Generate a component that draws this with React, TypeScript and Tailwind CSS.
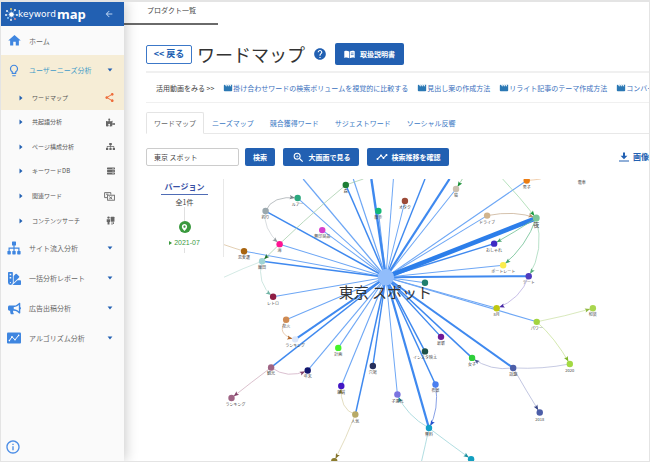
import type { ReactNode } from 'react';
import {
  MdHome,
  MdLightbulbOutline,
  MdShare,
  MdInfoOutline,
  MdZoomIn,
  MdMovie,
  MdHelp,
  MdArrowBack,
  MdTimeline,
} from 'react-icons/md';
import { FaSitemap, FaSwatchbook, FaBullhorn, FaPuzzlePiece, FaServer, FaMapMarkerAlt } from 'react-icons/fa';

type Point = [number, number];

const CENTER: Point = [385.5, 277];

interface GraphNode {
  at: Point;
  color: string;
  label?: string;
  labelX?: number;
  /** Width of the spoke to the centre; 0 leaves it out. */
  spoke: number;
}

const nodes: GraphNode[] = [
  { at: [297.5, 198], color: '#2ba87e', label: 'ルアー', spoke: 1 },
  { at: [265.5, 211], color: '#9ba8ae', label: '釣り', spoke: 1.5 },
  { at: [345.5, 185], color: '#1e7f35', label: '森', spoke: 1.5 },
  { at: [322, 230], color: '#d63fcc', label: '無印良品', spoke: 1 },
  { at: [279.5, 244], color: '#ff1493', label: '海', spoke: 1 },
  { at: [244, 251], color: '#a8640f', label: '恋愛運', spoke: 1 },
  { at: [262, 261], color: '#a0d4d4', label: '飯田', spoke: 1.6 },
  { at: [273, 296.5], color: '#8e1d44', label: 'レトロ', spoke: 1 },
  { at: [286, 319.5], color: '#cf8a52', label: '花火', spoke: 1 },
  { at: [295, 339], color: '#dbe7fb', label: 'ランキング', spoke: 2 },
  { at: [271, 367], color: '#9f6484', label: '観光', spoke: 1.5 },
  { at: [307.5, 370], color: '#11166e', label: '年末', spoke: 1.1 },
  { at: [231.5, 397.5], color: '#9f6484', label: 'ランキング', labelX: 235.5, spoke: 0 },
  { at: [338, 347.5], color: '#45f32a', label: '計画', spoke: 1.1 },
  { at: [341, 385.5], color: '#4217c4', label: '雑貨', spoke: 1.1 },
  { at: [355, 414], color: '#b8aa66', label: '人気', spoke: 1.5 },
  { at: [334, 460.5], color: '#8b7b2c', spoke: 0 },
  { at: [372.5, 365.5], color: '#262f5c', label: '穴場', spoke: 1.4 },
  { at: [397, 394], color: '#7b74e0', label: '子連れ', spoke: 1 },
  { at: [428.5, 427.5], color: '#129fc8', label: '無料', spoke: 2.2 },
  { at: [470.5, 458.5], color: '#129fc0', spoke: 0 },
  { at: [435, 384], color: '#4a7ff0', label: '夜景', spoke: 1.5 },
  { at: [424.5, 351], color: '#1d5148', label: 'インスタ映え', spoke: 1.5 },
  { at: [440.5, 336.5], color: '#6e1a99', label: '最新', spoke: 1.4 },
  { at: [471.5, 357.5], color: '#2ecf3a', label: '女子', spoke: 1.5 },
  { at: [512.5, 367.5], color: '#4c5ea8', label: '話題', spoke: 2 },
  { at: [539, 412], color: '#4c5ea8', label: '2018', spoke: 0 },
  { at: [569, 363.5], color: '#a3d943', label: '2020', spoke: 0 },
  { at: [536, 321.5], color: '#a3d43f', label: 'パワー', spoke: 1.1 },
  { at: [592, 308], color: '#a9d64f', label: '和装', spoke: 0 },
  { at: [496, 308], color: '#c0c80f', label: '8月', spoke: 1.1 },
  { at: [528, 276], color: '#4f3cbf', label: 'デート', spoke: 2 },
  { at: [502.5, 265], color: '#fbec4d', label: 'ポートレート', spoke: 1 },
  { at: [493.5, 243.5], color: '#3d2bc4', label: 'おしゃれ', spoke: 1.4 },
  { at: [486.5, 215.5], color: '#d1b48d', label: 'ドライブ', spoke: 1 },
  { at: [526, 180.5], color: '#ec7d13', label: '男子', labelX: 526, spoke: 1.1 },
  { at: [455.5, 189], color: '#cbbfb0', label: '猫', spoke: 1 },
  { at: [404.5, 201], color: '#9c4a38', label: 'オタク', spoke: 1 },
  { at: [378, 211], color: '#12b877', label: '散歩', spoke: 1 },
  { at: [424.5, 282.5], color: '#1f7f6e', spoke: 1 },
];

// Spokes to words that lie above the visible part of the map.
const outerSpokes: { to: Point; width: number }[] = [
  { to: [303, 179], width: 1.3 },
  { to: [353, 179], width: 1.2 },
  { to: [371, 179], width: 2.4 },
  { to: [393, 179], width: 1 },
  { to: [424.5, 179], width: 1.4 },
  { to: [449, 179], width: 2.2 },
];

interface Link {
  from: Point;
  bend: Point;
  to: Point;
  color: string;
  tip?: string;
}

const links: Link[] = [
  { from: [265.5, 211], bend: [272, 195], to: [297.5, 198], color: '#aab0b4', tip: '#7d868b' },
  { from: [265.5, 211], bend: [262, 228], to: [279.5, 244], color: '#cfd5d8', tip: '#8f979b' },
  { from: [345.5, 185], bend: [303, 220], to: [262, 261], color: '#a9cfae', tip: '#1e6f2c' },
  { from: [345.5, 185], bend: [354, 182], to: [363, 179], color: '#a9cfae' },
  { from: [244, 251], bend: [234, 248], to: [224, 244.5], color: '#dcc3a0' },
  { from: [262, 261], bend: [243, 268], to: [224, 277], color: '#c9e5de' },
  { from: [262, 261], bend: [256, 283], to: [273, 296.5], color: '#c3e1da', tip: '#6fb3a4' },
  { from: [286, 319.5], bend: [275, 334], to: [295, 339], color: '#e2bf9f', tip: '#b36a2f' },
  { from: [271, 367], bend: [287, 379], to: [307.5, 370], color: '#d2b2c5', tip: '#84426a' },
  { from: [271, 367], bend: [251, 382], to: [231.5, 397.5], color: '#d2b2c0', tip: '#84426a' },
  { from: [355, 414], bend: [339, 409], to: [341, 385.5], color: '#dcd5b0', tip: '#998833' },
  { from: [355, 414], bend: [346, 437], to: [334, 460.5], color: '#dcd5b0', tip: '#84742c' },
  { from: [463, 177], bend: [460, 182], to: [455.5, 189], color: '#8cc596', tip: '#189035' },
  { from: [502, 179], bend: [519, 197], to: [535.5, 218], color: '#a5dbae', tip: '#179b3d' },
  { from: [486.5, 215.5], bend: [514, 210], to: [535.5, 218], color: '#cbb399', tip: '#b18b67' },
  { from: [535.5, 218], bend: [514, 232], to: [493.5, 243.5], color: '#6ebf92', tip: '#43a26e' },
  { from: [535.5, 218], bend: [526, 246], to: [502.5, 265], color: '#6ebf92', tip: '#43a26e' },
  { from: [535.5, 218], bend: [544, 250], to: [528, 276], color: '#a7d9bb', tip: '#54ae7c' },
  { from: [528, 276], bend: [520, 299], to: [496, 308], color: '#bcb0e2', tip: '#4728a5' },
  { from: [536, 321.5], bend: [564, 316], to: [592, 308], color: '#d0e3ac', tip: '#92ba43' },
  { from: [536, 321.5], bend: [554, 337], to: [569, 363.5], color: '#cae39d', tip: '#7eb629' },
  { from: [512.5, 367.5], bend: [542, 369], to: [569, 363.5], color: '#b9bedc' },
  { from: [512.5, 367.5], bend: [490, 371], to: [471.5, 357.5], color: '#b3b8da', tip: '#4c5695' },
  { from: [512.5, 367.5], bend: [526, 391], to: [539, 412], color: '#b3b8da', tip: '#354487' },
  { from: [435, 384], bend: [439, 409], to: [428.5, 427.5], color: '#6a8ae0', tip: '#2552ce' },
  { from: [428.5, 427.5], bend: [406, 415], to: [397, 394], color: '#9ed4da', tip: '#198f9e' },
  { from: [428.5, 427.5], bend: [449, 443], to: [470.5, 458.5], color: '#9ed4da', tip: '#198f9e' },
  { from: [428.5, 427.5], bend: [425, 444], to: [421, 461], color: '#9ed4da' },
  { from: [526, 180.5], bend: [533, 180], to: [540, 179], color: '#edc49c' },
];

function arrowTip(link: Link): string {
  const dx = link.to[0] - link.bend[0];
  const dy = link.to[1] - link.bend[1];
  const len = Math.hypot(dx, dy);
  const ux = dx / len;
  const uy = dy / len;
  const at = (back: number, side: number) =>
    `${link.to[0] - ux * back - uy * side},${link.to[1] - uy * back + ux * side}`;
  return `${at(2.8, 0)} ${at(8, 2.1)} ${at(7, 0)} ${at(8, -2.1)}`;
}

function WordMap() {
  return (
    <svg viewBox="224 179 424 281" className="block w-full" role="img" aria-label="ワードマップ 東京 スポット">
      {nodes
        .filter((n) => n.spoke > 0)
        .map((n, i) => (
          <line
            key={i}
            x1={CENTER[0]}
            y1={CENTER[1]}
            x2={n.at[0]}
            y2={n.at[1]}
            stroke={n.spoke > 1.3 ? '#3f89ef' : '#6ea7f5'}
            strokeWidth={n.spoke}
          />
        ))}
      {outerSpokes.map((s, i) => (
        <line
          key={i}
          x1={CENTER[0]}
          y1={CENTER[1]}
          x2={s.to[0]}
          y2={s.to[1]}
          stroke={s.width > 1.3 ? '#3f89ef' : '#6ea7f5'}
          strokeWidth={s.width}
        />
      ))}
      <line x1={CENTER[0]} y1={CENTER[1]} x2="535.5" y2="218" stroke="#2c7eea" strokeWidth="4.6" />
      {links.map((l, i) => (
        <g key={i}>
          <path
            d={`M${l.from[0]} ${l.from[1]}Q${l.bend[0]} ${l.bend[1]} ${l.to[0]} ${l.to[1]}`}
            fill="none"
            stroke={l.color}
            strokeWidth="0.8"
          />
          {l.tip && <polygon points={arrowTip(l)} fill={l.tip} />}
        </g>
      ))}
      <circle cx={CENTER[0]} cy={CENTER[1]} r="8.2" fill="#91bdfb" />
      {nodes.map((n, i) => (
        <g key={i}>
          <circle cx={n.at[0]} cy={n.at[1]} r="3.2" fill={n.color} />
          {n.label && (
            <text x={n.labelX ?? n.at[0]} y={n.at[1] + 8} textAnchor="middle" className="fill-[#444] text-[4px]">
              {n.label}
            </text>
          )}
        </g>
      ))}
      <circle cx="535.5" cy="218" r="3.5" fill="#7bc797" />
      <text x="535.5" y="227" textAnchor="middle" className="fill-[#444] text-[6px]">
        夜
      </text>
      <text x="581" y="184" textAnchor="middle" className="fill-[#444] text-[4px]">
        電車
      </text>
      <text x="385" y="298" textAnchor="middle" className="fill-[#333] text-[15px]">
        東京 スポット
      </text>
    </svg>
  );
}

function LogoMark() {
  const rays: [number, number, string][] = [
    [2, 3, '#fff'],
    [6, 1, '#f4d35e'],
    [10, 2, '#fff'],
    [1, 7, '#fff'],
    [3, 10, '#8fd3ff'],
    [6, 12, '#fff'],
    [10, 11, '#f08a8a'],
    [12, 7, '#fff'],
  ];
  return (
    <svg viewBox="0 0 13 13" className="size-[13px] shrink-0" aria-hidden="true">
      {rays.map(([x, y, c]) => (
        <g key={`${x}-${y}`}>
          <line x1="6.5" y1="6.5" x2={x} y2={y} stroke="#9fc1ea" strokeWidth="0.5" />
          <circle cx={x} cy={y} r="0.9" fill={c} />
        </g>
      ))}
      <circle cx="6.5" cy="6.5" r="2.3" fill="#fff" />
    </svg>
  );
}

function TreeIcon() {
  return (
    <svg viewBox="0 0 14 14" className="size-[14px]" fill="currentColor" aria-hidden="true">
      <rect x="5" y="0.5" width="4" height="4" rx="0.6" />
      <rect x="0.4" y="10" width="3.4" height="3.4" rx="0.6" />
      <rect x="5.3" y="10" width="3.4" height="3.4" rx="0.6" />
      <rect x="10.2" y="10" width="3.4" height="3.4" rx="0.6" />
      <path d="M7 4v7M2.1 10.5V7.2h9.8v3.3" fill="none" stroke="currentColor" strokeWidth="1.2" />
    </svg>
  );
}

function ChartBoxIcon() {
  return (
    <svg viewBox="0 0 14 12" className="h-[12px] w-[14px]" aria-hidden="true">
      <rect x="0" y="0.5" width="14" height="11" rx="1" fill="currentColor" />
      <path d="M2.4 8.6 5 4.8l3 3 3.6-4.4" fill="none" stroke="#fff" strokeWidth="1" />
      <g fill="#fff">
        <circle cx="2.4" cy="8.6" r="0.8" />
        <circle cx="5" cy="4.8" r="0.8" />
        <circle cx="8" cy="7.8" r="0.8" />
        <circle cx="11.6" cy="3.4" r="0.8" />
      </g>
    </svg>
  );
}

function RelatedIcon() {
  return (
    <svg viewBox="0 0 11 9" className="h-[9px] w-[11px]" fill="none" stroke="currentColor" strokeWidth="0.9" aria-hidden="true">
      <path d="M3 5.6H.6V.6h6.2v2" />
      <rect x="3.6" y="3.2" width="6.8" height="5" />
      <path d="m5.2 4.6 3 2.4m0-2.4-3 2.4M2 2.2h2.4" />
    </svg>
  );
}

function ContentSearchIcon() {
  return (
    <svg viewBox="0 0 10 10" className="size-[9px]" fill="currentColor" aria-hidden="true">
      <circle cx="2.8" cy="1.8" r="1.3" />
      <path d="M.8 3.6h3.7v3H3.9V9.4H1.7V6.6H.8z" />
      <rect x="5.2" y="0.8" width="4.2" height="5.6" rx="0.6" />
      <path d="M6.2 7h1v2.6h-1zM7.8 7h1v1.8h-1z" />
    </svg>
  );
}

function ManualIcon() {
  return (
    <svg viewBox="0 0 11 9" className="h-[9px] w-[11px]" aria-hidden="true">
      <path d="M.3 1.2C2 .5 3.8.6 5.2 1.5v6.8C3.8 7.5 2 7.4.3 8z" fill="#fff" />
      <path d="M10.7 1.2C9 .5 7.2.6 5.8 1.5v6.8c1.4-.8 3.2-.9 4.9-.3z" fill="#fff" />
      <path d="M6.8 3h2.8M6.8 4.6h2.8" stroke="#2260b2" strokeWidth="0.7" />
    </svg>
  );
}

function DownloadIcon() {
  return (
    <svg viewBox="0 0 10 10" className="size-[10px]" fill="currentColor" aria-hidden="true">
      <path d="M4 .5h2v3.2h2.4L5 7.2 1.6 3.7H4zM0 8.5h10v1H0z" />
    </svg>
  );
}

function Caret({ right = false }: { right?: boolean }) {
  return (
    <svg viewBox="0 0 6 6" className="size-[6px] shrink-0" fill="#2260b2" aria-hidden="true">
      <path d={right ? 'M1.5.6 4.5 3l-3 2.4z' : 'M.6 1.6h4.8L3 4.6z'} />
    </svg>
  );
}

function MenuRow({ icon, label, active = false }: { icon: ReactNode; label: string; active?: boolean }) {
  return (
    <button
      type="button"
      className={`flex h-[30px] w-full items-center pr-[11px] pl-[6px] text-left ${active ? 'text-[#3f9bc8]' : 'text-[#666]'}`}
    >
      <span className="flex w-[14px] justify-center text-[#3f86e0]">{icon}</span>
      <span className="ml-2 flex-1">{label}</span>
      <Caret />
    </button>
  );
}

function SubRow({ icon, label, active = false }: { icon: ReactNode; label: string; active?: boolean }) {
  return (
    <a
      href="#"
      className={`flex flex-1 items-center pr-[9px] pl-[17px] text-[6px] text-[#555] ${active ? 'h-[25px]' : ''}`}
    >
      <Caret right />
      <span className="ml-[8px] flex-1">{label}</span>
      <span className={active ? 'text-[#ee6c3a]' : 'text-[#666]'}>{icon}</span>
    </a>
  );
}

const primary = 'flex items-center justify-center rounded-[2px] bg-[#2260b2] font-bold text-white';

const videos = [
  '掛け合わせワードの検索ボリュームを視覚的に比較する',
  '見出し案の作成方法',
  'リライト記事のテーマ作成方法',
  'コンバージョン',
];

const tabs = ['ワードマップ', 'ニーズマップ', '競合獲得ワード', 'サジェストワード', 'ソーシャル反響'];

export default function App() {
  return (
    <div
      lang="ja"
      className="flex min-h-screen overflow-hidden border border-t-2 border-b-2 border-[#e4e4e4] bg-white font-['Noto_Sans_CJK_JP',sans-serif] text-[7px] leading-[10px] text-[#444]"
    >
      <aside className="relative z-10 flex w-[123px] shrink-0 flex-col bg-[#fafafa] shadow-[2px_0_12px_rgba(0,0,0,0.2)]">
        <div className="flex h-6 items-center bg-[#2260b2] pr-[10px] pl-[4px] text-white">
          <LogoMark />
          <span className="font-['DejaVu_Sans',sans-serif] text-[9px]">keyword</span>
          <span className="ml-px flex-1 font-['Open_Sans',sans-serif] text-[13px] font-bold">map</span>
          <button type="button" aria-label="メニューを閉じる">
            <MdArrowBack className="size-[10px] text-[#b9d2f0]" />
          </button>
        </div>
        <nav className="flex flex-col">
          <a href="#" className="flex h-[29px] items-center pl-[6px] text-[#666]">
            <MdHome className="size-[15px] text-[#3f86e0]" />
            <span className="ml-[7px]">ホーム</span>
          </a>
          <div className="bg-[#f6edd6]">
            <MenuRow active icon={<MdLightbulbOutline className="size-[15px]" />} label="ユーザーニーズ分析" />
            <SubRow active icon={<MdShare className="size-[11px]" />} label="ワードマップ" />
          </div>
          <div className="flex h-[123px] flex-col">
            <SubRow icon={<FaPuzzlePiece className="size-[9px]" />} label="共起語分析" />
            <SubRow icon={<FaSitemap className="size-[9px]" />} label="ページ構成分析" />
            <SubRow icon={<FaServer className="size-[8px]" />} label="キーワードDB" />
            <SubRow icon={<RelatedIcon />} label="関連ワード" />
            <SubRow icon={<ContentSearchIcon />} label="コンテンツサーチ" />
          </div>
          <MenuRow icon={<TreeIcon />} label="サイト流入分析" />
          <MenuRow icon={<FaSwatchbook className="size-[13px]" />} label="一括分析レポート" />
          <MenuRow icon={<FaBullhorn className="size-[13px]" />} label="広告出稿分析" />
          <MenuRow icon={<ChartBoxIcon />} label="アルゴリズム分析" />
        </nav>
        <button type="button" aria-label="情報" className="mt-auto mb-[6px] ml-[4px] self-start">
          <MdInfoOutline className="size-4 text-[#4b8de6]" />
        </button>
      </aside>

      <main className="min-w-0 flex-1">
        <div className="flex h-[23px] w-[94px] items-start border-b-2 border-[#6a6a6a] pt-[3px] pl-[23px]">プロダクト一覧</div>

        <div className="pl-[22px]">
          <header className="flex h-[48px] items-center border-b-2 border-[#f0f0f0] pt-[12px]">
            <button
              type="button"
              className="h-[19px] w-[46px] rounded-[2px] border border-[#3c78c8] text-[9px] font-bold text-[#2260b2]"
            >
              &lt;&lt; 戻る
            </button>
            <h1 className="ml-[5px] text-[18px] leading-[24px] text-[#333]">ワードマップ</h1>
            <MdHelp className="ml-[8px] size-[14px] text-[#2260b2]" aria-label="ヘルプ" />
            <button type="button" className={`${primary} ml-[8px] h-[22px] w-[69px] gap-[5px]`}>
              <ManualIcon />
              取扱説明書
            </button>
          </header>

          <div className="flex h-[30px] items-center gap-[9px] overflow-hidden border-b border-[#f0f0f0] pl-[10px] whitespace-nowrap">
            <span>活用動画をみる &gt;&gt;</span>
            {videos.map((v) => (
              <a key={v} href="#" className="flex shrink-0 items-center text-[#3a70bd]">
                <MdMovie className="size-[10px] text-[#2b78b4]" />
                {v}
              </a>
            ))}
          </div>

          <div role="tablist" className="mt-[9px] flex h-[22px] border-b border-[#e8e8e8]">
            {tabs.map((t, i) => (
              <button
                key={t}
                type="button"
                role="tab"
                aria-selected={i === 0}
                className={
                  i === 0
                    ? '-mb-px rounded-t-[2px] border border-[#e4e4e4] border-b-white bg-white px-[7px] text-[#666]'
                    : 'px-2 text-[#3a78c4]'
                }
              >
                {t}
              </button>
            ))}
          </div>

          <form className="mt-[14px] flex h-[18px] items-stretch" onSubmit={(e) => e.preventDefault()}>
            <input
              aria-label="キーワード"
              defaultValue="東京 スポット"
              className="w-[93px] rounded-[2px] border border-[#ccc] px-[7px] text-[#444]"
            />
            <button type="submit" className={`${primary} ml-[6px] w-[30px]`}>
              検索
            </button>
            <button type="button" className={`${primary} ml-[8px] w-[76px] gap-[4px]`}>
              <MdZoomIn className="size-[13px]" />
              大画面で見る
            </button>
            <button type="button" className={`${primary} ml-[8px] w-[82px] gap-[4px]`}>
              <MdTimeline className="size-[12px]" />
              検索推移を確認
            </button>
            <button
              type="button"
              className="ml-auto flex items-center gap-[4px] text-[8px] font-bold text-[#2260b2]"
            >
              <DownloadIcon />
              画像
            </button>
          </form>

          <div className="mt-[13px] flex items-start">
            <section className="flex h-[78px] w-[78px] shrink-0 flex-col items-center border-r border-[#e8e8e8]">
              <h2 className="mt-[2px] h-[14px] w-[47px] border-b border-[#4f6cb5] pt-px text-center text-[8px] font-bold text-[#3850a5]">
                バージョン
              </h2>
              <p className="mt-[2px]">全1件</p>
              <span className="h-[14px] w-px bg-[#e0e0e0]" />
              <span className="flex size-3 shrink-0 items-center justify-center rounded-full bg-[#3a993e]">
                <FaMapMarkerAlt className="size-[7px] text-white" />
              </span>
              <a href="#" className="mt-[5px] flex items-center gap-[2px] font-['Liberation_Sans',sans-serif] text-[#3a993e]">
                <svg viewBox="0 0 3 4" className="h-[4px] w-[3px]" fill="currentColor" aria-hidden="true">
                  <path d="M0 0l3 2-3 2z" />
                </svg>
                2021-07
              </a>
              <span className="h-[5px] w-px bg-[#e0e0e0]" />
            </section>
            <div className="min-w-0 flex-1">
              <WordMap />
            </div>
          </div>
        </div>
      </main>
    </div>
  );
}
